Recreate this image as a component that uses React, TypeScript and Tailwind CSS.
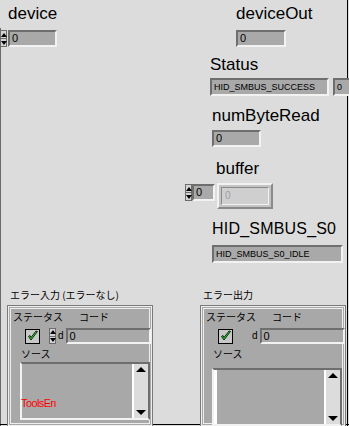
import React from "react"

const ui = { fontFamily: '"Liberation Sans", Arial, sans-serif' }
const jp = { fontFamily: '"Noto Sans CJK JP", "Liberation Sans", sans-serif' }

const Label = ({ x, y, text, size = "text-[17px]" }: { x: number; y: number; text: string; size?: string }) => (
  <div className={`absolute leading-none text-black whitespace-nowrap ${size}`} style={{ left: x, top: y, ...ui }}>
    {text}
  </div>
)

const Arrows = ({ h }: { h: number }) => (
  <div className="flex flex-col w-[7px] border border-[#6b6b6b] bg-[#d4d4d4]" style={{ height: h }}>
    <div className="flex-1 flex items-center justify-center border-b border-[#6b6b6b]">
      <div className="w-0 h-0 border-l-[3px] border-r-[3px] border-b-[4px] border-l-transparent border-r-transparent border-b-black" />
    </div>
    <div className="flex-1 flex items-center justify-center">
      <div className="w-0 h-0 border-l-[3px] border-r-[3px] border-t-[4px] border-l-transparent border-r-transparent border-t-black" />
    </div>
  </div>
)

const Box = ({ w, h, text, small, dim }: { w: number; h: number; text: string; small?: boolean; dim?: boolean }) => (
  <div
    className={`flex items-center border-2 border-t-[#6e6e6e] border-l-[#6e6e6e] border-b-[#f2f2f2] border-r-[#f2f2f2] px-[2px] ${
      dim ? "bg-[#cfcfcf] text-[#9a9a9a]" : "bg-[#a9a9a9] text-black"
    } ${small ? "text-[9px]" : "text-[11px]"} leading-none whitespace-nowrap overflow-hidden`}
    style={{ width: w, height: h, ...ui }}
  >
    {text}
  </div>
)

const Check = () => (
  <div className="w-[15px] h-[15px] border border-black bg-[#c8c8c8] flex items-center justify-center">
    <svg width="12" height="12" viewBox="0 0 12 12">
      <path d="M1.5 6.5 L4 10 L10.5 1.5 L9 1 L4 7.5 L3 5.5 Z" fill="#22dd22" stroke="#000" strokeWidth="0.8" />
    </svg>
  </div>
)

const SourceBox = ({ w, h, err }: { w: number; h: number; err?: boolean }) => (
  <div className="flex border-2 border-t-[#6e6e6e] border-l-[#f2f2f2] border-b-[#f2f2f2] border-r-[#6e6e6e] bg-[#a8a8a8]" style={{ width: w, height: h }}>
    <div className={`w-[3px] ${err ? "bg-[#a8a8a8]" : "bg-white"}`} />
    <div className="flex-1 relative">
      {err && (
        <div className="absolute left-[-4px] top-[34px] text-[11px] leading-none text-[#ff0000] tracking-[-0.6px] whitespace-nowrap" style={ui}>
          ToolsErı
        </div>
      )}
    </div>
    <div className="w-[16px] flex flex-col justify-between items-center bg-[#dcdcdc] border-l-2 border-white py-[3px]">
      <div className="w-0 h-0 border-l-[5px] border-r-[5px] border-b-[5px] border-l-transparent border-r-transparent border-b-black" />
      <div className="w-0 h-0 border-l-[5px] border-r-[5px] border-t-[5px] border-l-transparent border-r-transparent border-t-black" />
    </div>
  </div>
)

const ErrorCluster = ({ x, y, title, withArrows, err }: { x: number; y: number; title: string; withArrows?: boolean; err?: boolean }) => (
  <div className="absolute" style={{ left: x, top: y }}>
    <div className="text-[10px] leading-none text-black h-[16px] pl-[2px]" style={jp}>
      {title}
    </div>
    <div className="border-[3px] border-double border-[#eeeeee] outline outline-1 outline-[#7a7a7a] bg-[#a8a8a8] w-[144px] h-[120px] px-[2px] pt-[3px] text-[10px] leading-none" style={jp}>
      <div className="flex gap-[16px] text-black">
        <span>ステータス</span>
        <span>コード</span>
      </div>
      <div className="flex items-center mt-[6px]">
        <div className="ml-[12px]">
          <Check />
        </div>
        <div className={`flex items-center ${withArrows ? "ml-[9px]" : "ml-[17px]"}`}>
          {withArrows && <Arrows h={16} />}
          <span className="text-[10px] mx-[2px] text-black" style={ui}>d</span>
          <Box w={85} h={16} text="0" />
        </div>
      </div>
      <div className={`mt-[5px] ${withArrows ? "ml-[8px]" : "ml-[7px]"} text-black`}>ソース</div>
      <div className={withArrows ? "mt-[3px] ml-[7px]" : "mt-[9px] ml-[6px]"}>
        <SourceBox w={130} h={58} err={err} />
      </div>
    </div>
  </div>
)

export default function App() {
  return (
    <div className="relative w-[349px] h-[426px] bg-[#dcdcdc] overflow-hidden" style={ui}>
      <div className="absolute left-0 top-[28px] bottom-0 w-px bg-[#6a6a6a]" />
      <div className="absolute right-[1px] top-0 bottom-0 w-px bg-black" />
      <div className="absolute left-0 right-0 bottom-[1px] h-px bg-black" />

      <Label x={8} y={5} text="device" />
      <div className="absolute flex" style={{ left: 0, top: 30 }}>
        <Arrows h={17} />
        <div className="ml-[1px]">
          <Box w={49} h={17} text="0" />
        </div>
      </div>

      <Label x={236} y={5} text="deviceOut" />
      <div className="absolute" style={{ left: 236, top: 30 }}>
        <Box w={50} h={17} text="0" />
      </div>

      <Label x={210} y={56} text="Status" />
      <div className="absolute flex gap-[4px]" style={{ left: 210, top: 78 }}>
        <Box w={119} h={18} text="HID_SMBUS_SUCCESS" small />
        <Box w={20} h={18} text="0" small />
      </div>

      <Label x={212} y={107} text="numByteRead" />
      <div className="absolute" style={{ left: 212, top: 130 }}>
        <Box w={49} h={17} text="0" />
      </div>

      <Label x={216} y={160} text="buffer" />
      <div className="absolute flex items-start" style={{ left: 185, top: 184 }}>
        <Arrows h={17} />
        <Box w={23} h={17} text="0" />
        <div className="ml-[2px] mt-[-1px] w-[56px] h-[26px] border-2 border-t-[#f2f2f2] border-l-[#f2f2f2] border-b-[#8a8a8a] border-r-[#8a8a8a] bg-[#c4c4c4] p-[2px]">
          <div className="w-full h-full border border-t-[#8a8a8a] border-l-[#8a8a8a] border-b-[#f2f2f2] border-r-[#f2f2f2] bg-[#cfcfcf] text-[10px] text-[#9aa0a8] leading-none flex items-center px-[3px]" style={ui}>
            0
          </div>
        </div>
      </div>

      <Label x={212} y={221} text="HID_SMBUS_S0" size="text-[16px] tracking-[0.2px]" />
      <div className="absolute" style={{ left: 212, top: 245 }}>
        <Box w={131} h={18} text="HID_SMBUS_S0_IDLE" small />
      </div>

      <ErrorCluster x={8} y={290} title="エラー入力 (エラーなし)" withArrows err />
      <ErrorCluster x={201} y={290} title="エラー出力" />
    </div>
  )
}
